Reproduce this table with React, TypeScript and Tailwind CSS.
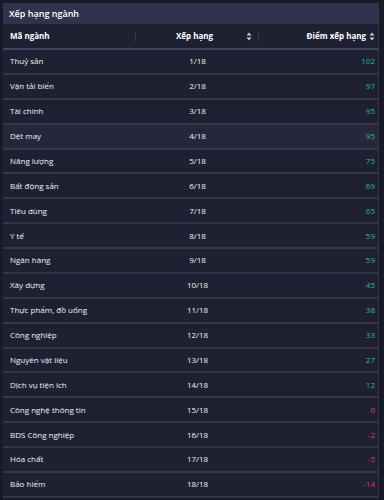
import React from 'react';

const rows = [
  { name: 'Thuỷ sản', rank: '1/18', score: 102 },
  { name: 'Vận tải biển', rank: '2/18', score: 97 },
  { name: 'Tài chính', rank: '3/18', score: 95 },
  { name: 'Dệt may', rank: '4/18', score: 95 },
  { name: 'Năng lượng', rank: '5/18', score: 75 },
  { name: 'Bất động sản', rank: '6/18', score: 69 },
  { name: 'Tiêu dùng', rank: '7/18', score: 65 },
  { name: 'Y tế', rank: '8/18', score: 59 },
  { name: 'Ngân hàng', rank: '9/18', score: 59 },
  { name: 'Xây dựng', rank: '10/18', score: 45 },
  { name: 'Thực phẩm, đồ uống', rank: '11/18', score: 38 },
  { name: 'Công nghiệp', rank: '12/18', score: 33 },
  { name: 'Nguyên vật liệu', rank: '13/18', score: 27 },
  { name: 'Dịch vụ tiện ích', rank: '14/18', score: 12 },
  { name: 'Công nghệ thông tin', rank: '15/18', score: 0 },
  { name: 'BDS Công nghiệp', rank: '16/18', score: -2 },
  { name: 'Hóa chất', rank: '17/18', score: -5 },
  { name: 'Bảo hiểm', rank: '18/18', score: -14 },
];

const SortIcon = () => (
  <svg width="6" height="9" viewBox="0 0 6 9" className="shrink-0">
    <path d="M3 0.5 L5.5 3.5 H0.5 Z" fill="#c9cbd8" />
    <path d="M3 8.5 L5.5 5.5 H0.5 Z" fill="#c9cbd8" />
  </svg>
);

export default function App() {
  return (
    <div
      className="w-[384px] h-[500px] overflow-hidden bg-[#191a28] pl-[3px] pt-[3px]"
      style={{ fontFamily: '"Open Sans", "Noto Sans", sans-serif' }}
    >
      <div className="w-[376px] bg-[#1f2133] border-r border-[#34364c]">
        <div className="h-[21px] bg-[#31334d] flex items-center px-[6px] text-[9px] font-semibold text-white">
          Xếp hạng ngành
        </div>
        <table className="w-full border-collapse table-fixed">
          <colgroup>
            <col className="w-[133px]" />
            <col className="w-[123px]" />
            <col />
          </colgroup>
          <thead>
            <tr className="h-[25px] border-b-2 border-[#44465e] text-[8px] font-bold text-white">
              <th className="px-[7px] text-left font-bold">
                <div className="flex items-center justify-between">
                  <span>Mã ngành</span>
                  <span className="w-px h-[11px] bg-[#34364c] -mr-[7px]" />
                </div>
              </th>
              <th className="pl-[7px] text-center font-bold">
                <div className="flex items-center">
                  <span className="flex-1 text-center">Xếp hạng</span>
                  <SortIcon />
                  <span className="w-px h-[11px] bg-[#34364c] ml-[6px]" />
                </div>
              </th>
              <th className="pr-[3px] text-right font-bold">
                <div className="flex items-center justify-end gap-[3px]">
                  <span>Điểm xếp hạng</span>
                  <SortIcon />
                </div>
              </th>
            </tr>
          </thead>
          <tbody className="text-[8px] font-medium text-[#f0f1f6]">
            {rows.map((r, i) => (
              <tr
                key={r.name}
                className={`h-[24.88px] border-b-2 border-[#34364c] ${i === 3 ? 'bg-[#25273b]' : ''}`}
              >
                <td className="px-[7px]">{r.name}</td>
                <td className="text-center">{r.rank}</td>
                <td
                  className={`pr-[3px] text-right ${r.score > 0 ? 'text-[#2fb98a]' : 'text-[#d9376a]'}`}
                >
                  {r.score}
                </td>
              </tr>
            ))}
          </tbody>
        </table>
      </div>
    </div>
  );
}
